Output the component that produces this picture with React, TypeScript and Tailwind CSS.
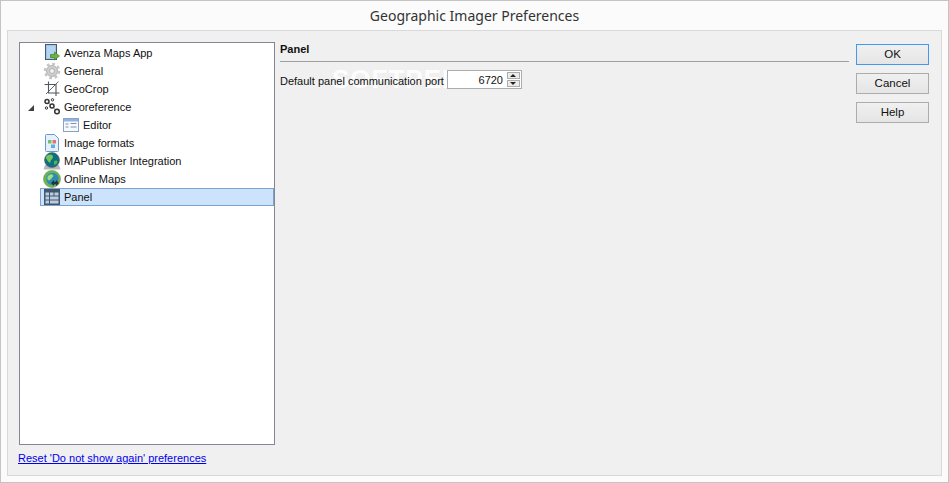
import React from "react";

const AvenzaIcon = () => (
  <svg width="18" height="18" viewBox="0 0 18 18">
    <rect x="2.500" y="0.500" width="11" height="15" fill="#9cc4ee" stroke="#4a5a68" />
    <rect x="4" y="2" width="8" height="12" fill="#b5d5f5" />
    <path d="M7.500 10.500h4V8l5 4-5 4v-2.500h-4z" fill="#6cb33f" stroke="#3f7f24" strokeWidth="0.7" />
  </svg>
);

const GearIcon = () => (
  <svg width="18" height="18" viewBox="0 0 18 18">
    <circle cx="9" cy="9" r="5.500" fill="#cfcfcf" stroke="#b0b0b0" />
    <circle cx="9" cy="9" r="7" fill="none" stroke="#c4c4c4" strokeWidth="2.600" strokeDasharray="2.700 2.800" />
    <circle cx="9" cy="9" r="2.500" fill="#f2f2f2" stroke="#b0b0b0" />
  </svg>
);

const CropIcon = () => (
  <svg width="18" height="18" viewBox="0 0 18 18" fill="none" stroke="#50565a" strokeWidth="1.100">
    <path d="M5.500 1.500v11.500H16.500" />
    <path d="M1.500 4.500h11.500V16" />
    <path d="M15.500 1.500L3 14" strokeWidth="0.900" />
  </svg>
);

const GeorefIcon = () => (
  <svg width="18" height="18" viewBox="0 0 18 18" fill="#f8f8f8" stroke="#333" strokeWidth="1.500">
    <path d="M4 3.500L9 8l5 5.500" fill="none" stroke="#999" strokeWidth="1" />
    <circle cx="4" cy="3.500" r="2" />
    <circle cx="9.500" cy="1.800" r="1.200" strokeWidth="1" />
    <circle cx="9" cy="8" r="2" />
    <circle cx="3.500" cy="10" r="1.200" strokeWidth="1" />
    <circle cx="14" cy="13.500" r="2.300" />
  </svg>
);

const EditorIcon = () => (
  <svg width="16" height="14" viewBox="0 0 16 14">
    <rect x="0.500" y="0.500" width="15" height="13" fill="#f6f9fd" stroke="#8aa2c4" />
    <rect x="1" y="1" width="14" height="2.500" fill="#8fb2e2" />
    <path d="M2.500 6h3M2.500 9h3M7.500 5.500h6M7.500 9h6" stroke="#7f92ac" />
  </svg>
);

const FormatsIcon = () => (
  <svg width="16" height="18" viewBox="0 0 16 18">
    <path d="M1.500 1.500a1 1 0 0 1 1-1h8l4 4v12a1 1 0 0 1-1 1h-11a1 1 0 0 1-1-1z" fill="#e6f0fb" stroke="#6a9ad2" />
    <rect x="4" y="6" width="3.500" height="3.500" fill="#7bbd6a" />
    <rect x="8.500" y="6" width="3.500" height="3.500" fill="#e57373" />
    <rect x="7" y="10.500" width="4" height="3.500" fill="#58b0e6" />
  </svg>
);

const GlobeIcon = () => (
  <svg width="18" height="18" viewBox="0 0 18 18">
    <path d="M2 13h14l1.500 4.500H.5z" fill="#b8b8b8" />
    <circle cx="9" cy="8" r="7.500" fill="#0e6f80" stroke="#55666a" strokeWidth="0.600" />
    <path d="M5 3c3-1.500 5 0 5 2S7 8 7.500 10 5 10 3.500 7 4 4 5 3z" fill="#77c55d" />
    <path d="M11 9c2-1 3.500-.5 3.500 1S12 13.500 11 12.500z" fill="#5cb14a" />
  </svg>
);

const OnlineIcon = () => (
  <svg width="18" height="18" viewBox="0 0 18 18">
    <circle cx="9" cy="9" r="8.500" fill="#6cb84f" stroke="#6f8a62" strokeWidth="0.600" />
    <circle cx="9.500" cy="9" r="6.200" fill="#2d8cb0" />
    <path d="M5 6c2-2 4-2 5-1s-1 3-2 4-2 2-3 1-1-3 0-4z" fill="#9fdc86" />
    <path d="M8 13l3-3v1.700h2V10l3 3-3 3v-1.700h-2V16z" fill="#2b3238" />
  </svg>
);

const PanelIcon = () => (
  <svg width="16" height="16" viewBox="0 0 16 16">
    <rect x="0" y="0" width="16" height="16" fill="#42566c" />
    <path d="M1.500 3.500h3.500v3H1.500zM6 3.500h3.500v3H6zM10.500 3.500h4v3h-4zM1.500 7.500h3.500v3H1.500zM1.500 11.500h3.500v3H1.500zM6 7.500h8.500v3H6zM6 11.500h8.500v3H6z" fill="#bccde0" />
  </svg>
);

const rows = [
  { label: "Avenza Maps App", icon: <AvenzaIcon /> },
  { label: "General", icon: <GearIcon /> },
  { label: "GeoCrop", icon: <CropIcon /> },
  { label: "Georeference", icon: <GeorefIcon />, open: true },
  { label: "Editor", icon: <EditorIcon />, child: true },
  { label: "Image formats", icon: <FormatsIcon /> },
  { label: "MAPublisher Integration", icon: <GlobeIcon /> },
  { label: "Online Maps", icon: <OnlineIcon /> },
  { label: "Panel", icon: <PanelIcon />, selected: true },
];

const DialogButton = ({ label, focused }: { label: string; focused?: boolean }) => (
  <button
    className={
      "h-[21px] w-[73px] border bg-gradient-to-b from-[#f0f0f0] to-[#e5e5e5] text-[11.500px] text-[#111] " +
      (focused ? "border-[#3c9bf0]" : "border-[#acacac]")
    }
  >
    {label}
  </button>
);

export default function App() {
  return (
    <div className="flex h-[483px] w-[949px] flex-col border border-[#c4c4c4] bg-[#fbfbfb] font-['Liberation_Sans',sans-serif] text-[11px] text-[#111]">
      <div className="flex h-[29px] shrink-0 items-center justify-center font-['Noto_Sans',sans-serif] text-[14px] leading-none text-[#333]">
        Geographic Imager Preferences
      </div>
      <div className="mx-[6px] flex h-[446px] border border-[#d9d9d9] bg-[#f0f0f0] pl-[11px] pr-[12px] pt-[11px]">
        <div className="flex w-[256px] shrink-0 flex-col">
          <div className="h-[403px] border border-[#828790] bg-white pl-[20px] pr-0 pt-[1px]">
            {rows.map((row) => (
              <div
                key={row.label}
                className={
                  "relative flex h-[18px] items-center border leading-none " +
                  (row.selected ? "border-[#7da2ce] bg-[#cce4fb]" : "border-transparent")
                }
              >
                {row.open && (
                  <span className="absolute left-[-13px] top-[6px] h-0 w-0 border-b-[6px] border-l-[6px] border-b-[#404040] border-l-transparent" />
                )}
                <span
                  className={
                    "flex h-[18px] shrink-0 items-center justify-center " +
                    (row.child ? "ml-[20px] w-[20px]" : "w-[22px]")
                  }
                >
                  {row.icon}
                </span>
                <span className={"pt-px " + (row.child ? "ml-[2px]" : "ml-[1px]")}>{row.label}</span>
              </div>
            ))}
          </div>
          <a href="#" className="mt-[5px] -ml-px w-fit leading-[16px] text-[#0000ee] underline">
            Reset 'Do not show again' preferences
          </a>
        </div>
        <div className="relative ml-[5px] w-[569px] shrink-0">
          <span className="pointer-events-none absolute left-[52px] top-[24px] text-[26px] font-bold leading-none tracking-[1px] text-white opacity-90">
            SOFTPEDIA
          </span>
          <div className="relative flex h-[20px] items-center border-b border-[#a0a0a0] pb-[4px] font-bold leading-none">
            Panel
          </div>
          <div className="relative mt-[8px] flex items-center">
            <span className="w-[167px] pt-[3px] leading-none">Default panel communication port</span>
            <div className="flex h-[19px] w-[75px] items-center border border-[#acacac] bg-white">
              <span className="flex-1 pr-[3px] pt-[1px] text-right leading-none">6720</span>
              <div className="flex h-full w-[15px] flex-col items-center justify-center gap-px pr-px">
                <span className="flex h-[7px] w-[13px] items-center justify-center border border-[#acacac] bg-[#ececec]">
                  <span className="h-0 w-0 border-x-[3px] border-b-[3px] border-x-transparent border-b-[#222]" />
                </span>
                <span className="flex h-[7px] w-[13px] items-center justify-center border border-[#acacac] bg-[#ececec]">
                  <span className="h-0 w-0 border-x-[3px] border-t-[3px] border-x-transparent border-t-[#222]" />
                </span>
              </div>
            </div>
          </div>
        </div>
        <div className="ml-[7px] flex flex-col gap-[8px] pt-[2px]">
          <DialogButton label="OK" focused />
          <DialogButton label="Cancel" />
          <DialogButton label="Help" />
        </div>
      </div>
    </div>
  );
}
